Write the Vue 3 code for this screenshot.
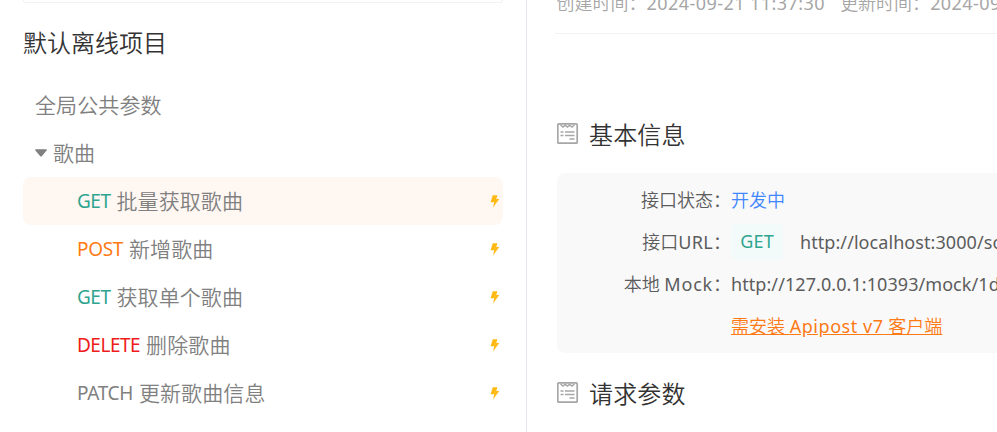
<script setup>
const apis = [
  { method: 'GET', name: '批量获取歌曲', active: true },
  { method: 'POST', name: '新增歌曲' },
  { method: 'GET', name: '获取单个歌曲' },
  { method: 'DELETE', name: '删除歌曲' },
  { method: 'PATCH', name: '更新歌曲信息' },
]
</script>

<template>
  <div class="page">
    <aside class="sidebar">
      <div class="search"></div>
      <h2 class="project">默认离线项目</h2>
      <nav class="tree">
        <div class="row"><span class="name">全局公共参数</span></div>
        <div class="row">
          <svg class="caret" viewBox="0 0 12 8"><path d="M.8.3h10.4q1.1.2.4 1.1L7 7q-1 1-2 0L.4 1.4Q-.3.5.8.3z" /></svg>
          <span class="name">歌曲</span>
        </div>
        <div v-for="api in apis" :key="api.name" class="row api" :class="{ active: api.active }">
          <span class="method" :class="api.method.toLowerCase()">{{ api.method }}</span>
          <span class="name">{{ api.name }}</span>
          <svg class="bolt" viewBox="0 0 9 12"><path d="M2.4.2h4.4L5.7 3.8h2.8L2.5 11.8l1.3-5H.4z" /></svg>
        </div>
      </nav>
    </aside>
    <main class="detail">
      <div class="meta">
        <span>创建时间：<span class="stamp">2024-09-21 11:37:30</span></span>
        <span class="updated">更新时间：<span class="stamp">2024-09-21 11:37:30</span></span>
      </div>
      <h3 class="heading first">
        <svg class="doc" viewBox="0 0 22 22">
          <rect class="frame" x="0.8" y="1.8" width="19.400" height="19.400" rx="1" />
          <path d="M3.500 3l2.500 2 2.300-1.800L10.500 5l2.200-1.800L15 5l2.500-2M3.500 10h3M8 10h9.500M3.500 13.500h3M8 13.500h9.500M12.500 17h5" />
        </svg>
        <span>基本信息</span>
      </h3>
      <section class="card">
        <div class="field"><span class="label">接口状态：</span><span class="status">开发中</span></div>
        <div class="field">
          <span class="label">接口<span class="lat">URL</span>：</span>
          <span class="badge">GET</span>
          <span class="url local">http://localhost:3000/song/list</span>
        </div>
        <div class="field"><span class="label">本地 <span class="lat mock">Mock</span>：</span><span class="url">http://127.0.0.1:10393/mock/1d2f</span></div>
        <div class="field"><span class="label"></span><a class="link">需安装 <span class="app">Apipost v7</span> 客户端</a></div>
      </section>
      <h3 class="heading second">
        <svg class="doc" viewBox="0 0 22 22">
          <rect class="frame" x="0.8" y="1.8" width="19.400" height="19.400" rx="1" />
          <path d="M3.500 3l2.500 2 2.300-1.800L10.500 5l2.200-1.800L15 5l2.500-2M3.500 10h3M8 10h9.500M3.500 13.500h3M8 13.500h9.500M12.500 17h5" />
        </svg>
        <span>请求参数</span>
      </h3>
    </main>
  </div>
</template>

<style>
body { margin: 0; background: #fff; }
</style>

<style scoped>
.page {
  display: flex;
  width: 997px;
  height: 432px;
  overflow: hidden;
  font-family: "Noto Sans", "Noto Sans CJK SC", sans-serif;
  font-weight: 350;
  white-space: nowrap;
}
h2, h3 { margin: 0; font-weight: 350; }
.sidebar {
  box-sizing: border-box;
  width: 527px;
  padding: 0 23px;
  border-right: 1px solid #e5e6eb;
  flex-shrink: 0;
}
.search {
  box-sizing: border-box;
  height: 3px;
  border: 1px solid #f2f2f2;
  border-top: 0;
  border-radius: 0 0 6px 6px;
}
.project { margin-top: 20px; height: 40px; line-height: 40px; font-size: 24px; color: #333; }
.tree { margin-top: 18px; color: #808080; font-size: 21px; }
.row {
  display: flex;
  align-items: center;
  box-sizing: border-box;
  width: 480px;
  height: 48px;
  padding-left: 12px;
  border-radius: 8px;
}
.name { padding-bottom: 2px; letter-spacing: 0.1px; }
.caret { width: 12px; height: 8px; margin-right: 6px; fill: #808080; }
.api { padding: 0 3px 0 54px; }
.active { background: #fff7f2; }
.method, .stamp, .lat, .url, .badge, .app { font-weight: 400; }
.method { margin-right: 6px; font-size: 19px; letter-spacing: -0.5px; }
.get { color: #2fa58f; }
.post { color: #ff7a15; letter-spacing: -0.35px; }
.delete { color: #ee1c1c; }
.patch { letter-spacing: -0.35px; }
.bolt { width: 10px; height: 13px; margin-left: auto; fill: #ffba18; }
.detail { flex: 1; padding-left: 30px; min-width: 0; overflow: hidden; }
.meta {
  display: flex;
  box-sizing: border-box;
  height: 34px;
  border-bottom: 1px solid #f2f2f2;
  color: #a6a6a6;
  font-size: 18px;
  line-height: 26px;
  margin-left: -2px;
}
.meta > span { margin-top: -10px; }
.meta > span:first-child { margin-left: 1.5px; }
.meta .updated { margin-left: 15px; }
.stamp { letter-spacing: 0.45px; }
.heading { display: flex; align-items: center; height: 40px; font-size: 24px; letter-spacing: 0.15px; color: #333; }
.heading.first { margin-top: 79px; }
.heading.second { margin-top: 19px; }
.doc { width: 22px; height: 22px; margin-right: 10px; fill: none; stroke: #a6a6a6; stroke-width: 1.5; }
.frame { stroke-width: 1.7; }
.card {
  box-sizing: border-box;
  height: 180px;
  width: 460px;
  margin-top: 20px;
  padding-top: 6px;
  border-radius: 8px;
  background: #f9f9f9;
  color: #5c5c5c;
  font-size: 18px;
}
.field { display: flex; align-items: center; height: 42px; }
.label { width: 174px; text-align: right; flex-shrink: 0; padding-bottom: 2px; }
.lat { letter-spacing: 0.3px; }
.mock { letter-spacing: 0.8px; }
.status { color: #4086ff; padding-bottom: 2px; }
.badge {
  box-sizing: border-box;
  width: 52px;
  height: 36px;
  flex-shrink: 0;
  line-height: 35px;
  border-radius: 4px;
  background: #f2fafa;
  text-align: center;
  color: #2fa58f;
  letter-spacing: 0.2px;
}
.url { letter-spacing: 0.07px; }
.local { margin-left: 17px; }
.link { color: #ff7a15; text-decoration: underline; padding-bottom: 2px; }
.app { letter-spacing: 0.55px; }
</style>
